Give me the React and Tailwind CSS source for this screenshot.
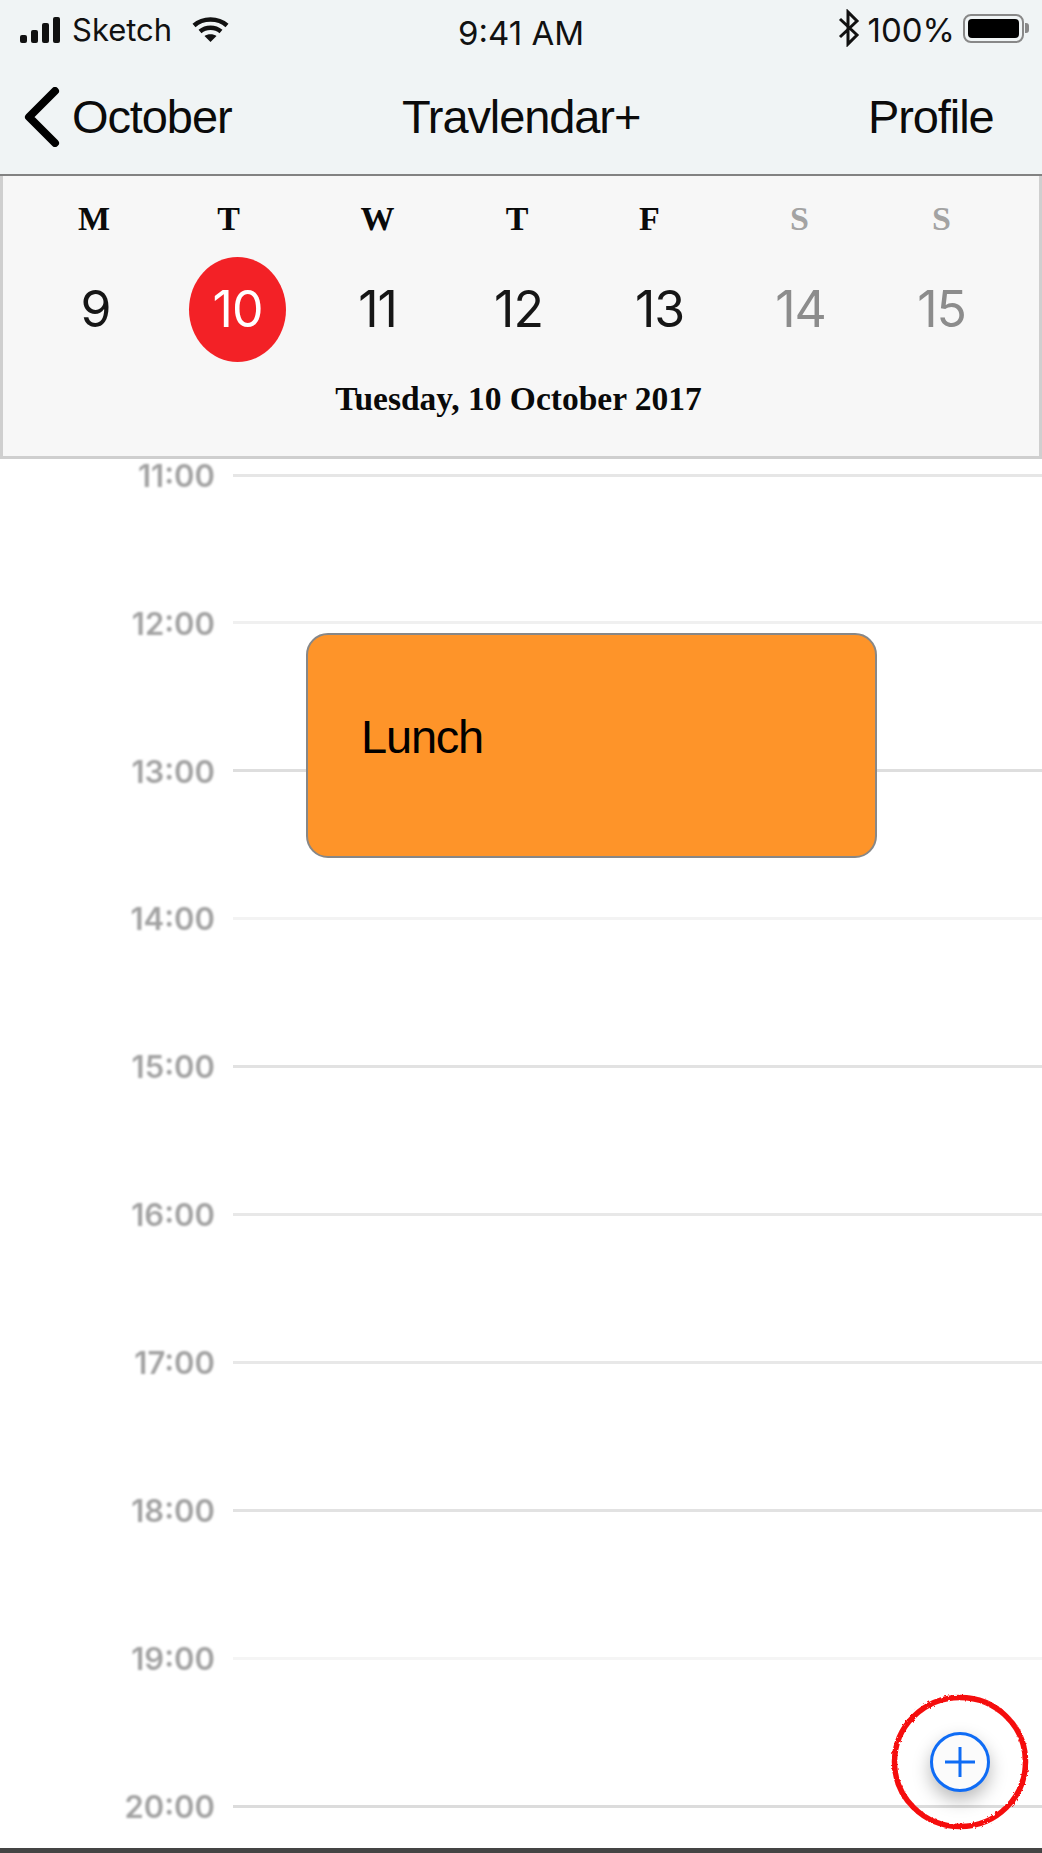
const WEEK = [
  { letter: 'M', day: '9', offset: 'pr-[3px]' },
  { letter: 'T', day: '10', offset: 'pr-[16px]', today: true },
  { letter: 'W', day: '11', offset: 'pr-0' },
  { letter: 'T', day: '12', offset: 'pr-[3px]' },
  { letter: 'F', day: '13', offset: 'pr-[20px]' },
  { letter: 'S', day: '14', offset: 'pr-[2px]', weekend: true },
  { letter: 'S', day: '15', offset: 'pr-0', weekend: true },
];

const HOURS = [
  { time: '11:00', line: 'bg-[#e6e6e6]' },
  { time: '12:00', line: 'bg-[#f0f0f0]' },
  { time: '13:00', line: 'bg-[#dedede]' },
  { time: '14:00', line: 'bg-[#f3f3f3]' },
  { time: '15:00', line: 'bg-[#e2e2e2]' },
  { time: '16:00', line: 'bg-[#e8e8e8]' },
  { time: '17:00', line: 'bg-[#e8e8e8]' },
  { time: '18:00', line: 'bg-[#e2e2e2]' },
  { time: '19:00', line: 'bg-[#f5f5f5]' },
  { time: '20:00', line: 'bg-[#dcdcdc]' },
];

function StatusBar() {
  return (
    <div className="flex items-start h-[64px] font-['Inter',sans-serif] text-[31px] text-[#111]">
      <div className="flex items-center w-[400px] pl-[20px] pt-[12px]">
        <svg width="40" height="28" viewBox="0 0 40 28" fill="#111">
          <rect x="0" y="19" width="7" height="8" rx="2" />
          <rect x="11" y="14" width="7" height="13" rx="2" />
          <rect x="22" y="7" width="7" height="20" rx="2" />
          <rect x="33" y="1" width="7" height="26" rx="2" />
        </svg>
        <span className="ml-[12px] leading-[36px]">Sketch</span>
        <svg className="ml-[20px]" width="37" height="26" viewBox="0 0 37 26" fill="none" stroke="#111" strokeWidth="4.5">
          <path d="M2 8.5 C11 0.5 26 0.5 35 8.5" />
          <path d="M8 14.5 C14 9.5 23 9.5 29 14.5" />
          <path d="M18.5 25 L12.5 19 C15.5 16.5 21.5 16.5 24.5 19 Z" fill="#111" stroke="none" />
        </svg>
      </div>
      <div className="w-[242px] pt-[15px] text-center leading-[36px] text-[33px]">9:41 AM</div>
      <div className="flex items-center flex-1 justify-end pr-[13px] pt-[8px]">
        <svg width="22" height="38" viewBox="0 0 22 38" fill="none" stroke="#111" strokeWidth="3">
          <path d="M2 10 L19 26 L10 35 L10 3 L19 12 L2 28" />
        </svg>
        <span className="ml-[8px] pt-[4px] leading-[36px] text-[33px]">100%</span>
        <div className="ml-[8px] flex items-center">
          <div className="w-[61px] h-[29px] border-2 border-[#888] rounded-[8px] p-[3px]">
            <div className="w-full h-full bg-black rounded-[4px]" />
          </div>
          <div className="w-[4px] h-[10px] bg-[#888] rounded-r-[3px] ml-[1px]" />
        </div>
      </div>
    </div>
  );
}

function NavBar() {
  return (
    <div className="relative flex items-center h-[110px] pb-[4px] font-['Liberation_Sans',sans-serif] text-[47px] tracking-[-1.1px] text-[#0b0b0b]">
      <svg className="ml-[24px]" width="36" height="60" viewBox="0 0 36 60" fill="none" stroke="#000" strokeWidth="8" strokeLinecap="round" strokeLinejoin="round">
        <path d="M31 4 L5 30 L31 56" />
      </svg>
      <span className="ml-[12px] w-[330px]">October</span>
      <span className="w-[466px]">Travlendar+</span>
      <span>Profile</span>
    </div>
  );
}

function WeekPanel() {
  return (
    <div className="h-[283px] bg-[#f7f7f7] border-x-[3px] border-b-[3px] border-[#cfcfcf] pl-[22px] pr-[27px]">
      <div className="grid grid-cols-7 pt-[23px] font-['Liberation_Serif',serif] font-bold text-[34px] leading-[40px]">
        {WEEK.map((d) => (
          <div key={d.day} className={`text-center ${d.offset} ${d.weekend ? 'text-[#a3a3a3]' : 'text-[#0a0a0a]'}`}>
            {d.letter}
          </div>
        ))}
      </div>
      <div className="grid grid-cols-7 mt-[18px] h-[105px] font-['Inter',sans-serif] font-normal text-[50px] tracking-[-1px]">
        {WEEK.map((d) => (
          <div key={d.day} className="flex items-center justify-center">
            {d.today ? (
              <div className="w-[97px] h-[105px] mr-[-2px] rounded-[50%] bg-[#f32126] text-white flex items-center justify-center">
                {d.day}
              </div>
            ) : (
              <span className={d.weekend ? 'text-[#8c8c8c]' : 'text-[#161616]'}>{d.day}</span>
            )}
          </div>
        ))}
      </div>
      <p className="mt-[17px] text-center font-['Liberation_Serif',serif] font-bold text-[33.5px] leading-[40px] text-[#0a0a0a]">
        Tuesday, 10 October 2017
      </p>
    </div>
  );
}

function Timeline() {
  return (
    <div className="relative flex-1 bg-white">
      <div className="flex flex-col gap-[115.9px]">
        {HOURS.map((h) => (
          <div key={h.time} className="flex items-center h-[32px]">
            <span className="w-[215px] pt-[2px] text-right font-['Inter',sans-serif] font-semibold text-[31px] text-[#a2a2a2] blur-[0.8px]">
              {h.time}
            </span>
            <div className={`ml-[18px] flex-1 h-[3px] ${h.line}`} />
          </div>
        ))}
      </div>

      {/* event */}
      <div className="absolute left-[306px] top-[174px] w-[571px] h-[225px] flex items-center pl-[53px] pb-[16px] bg-[#fe9429] border-[2.5px] border-[#878787] rounded-[22px] font-['Liberation_Sans',sans-serif] text-[47px] tracking-[-1.2px] text-black">
        Lunch
      </div>

      {/* add button with the red mark round it */}
      <div className="absolute left-[930px] top-[1273px] w-[60px] h-[60px] rounded-full border-[3px] border-[#0f6cf5] bg-[#fbfbfb] shadow-[0_8px_18px_rgba(0,0,0,0.28)] flex items-center justify-center">
        <svg width="32" height="32" viewBox="0 0 32 32" stroke="#0f6cf5" strokeWidth="3">
          <path d="M1 16 H31 M16 1 V31" />
        </svg>
      </div>
      <svg className="absolute left-[890px] top-[1235px]" width="140" height="138" viewBox="0 0 140 138" fill="none">
        <defs>
          <filter id="rough">
            <feTurbulence type="fractalNoise" baseFrequency="0.35" numOctaves="2" seed="4" />
            <feDisplacementMap in="SourceGraphic" scale="3" />
          </filter>
        </defs>
        <ellipse cx="70" cy="68" rx="65.5" ry="64.5" stroke="#f50a0a" strokeWidth="5.5" strokeDasharray="408 3" filter="url(#rough)" />
      </svg>
    </div>
  );
}

export default function App() {
  return (
    <div className="relative w-[1042px] h-[1853px] overflow-hidden flex flex-col bg-white">
      <header className="h-[176px] bg-[#f0f4f5] border-b-2 border-[#828282]">
        <StatusBar />
        <NavBar />
      </header>
      <WeekPanel />
      <Timeline />
      <div className="h-[5px] bg-[#444]" />
    </div>
  );
}
